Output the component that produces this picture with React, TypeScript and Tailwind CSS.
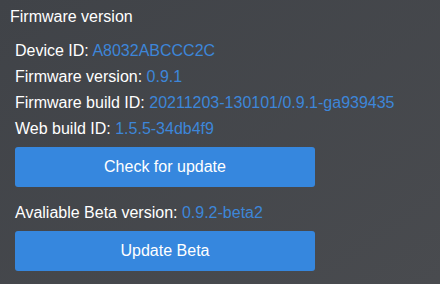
export default function App() {
  const rows: [string, string][] = [
    ["Device ID", "A8032ABCCC2C"],
    ["Firmware version", "0.9.1"],
    ["Firmware build ID", "20211203-130101/0.9.1-ga939435"],
    ["Web build ID", "1.5.5-34db4f9"],
  ];
  return (
    <div
      className="w-[440px] h-[284px] bg-gradient-to-br from-[#404348] to-[#494b4f] text-white text-[16px] leading-[24px] overflow-hidden"
      style={{ fontFamily: '"Liberation Sans", Arial, sans-serif' }}
    >
      <div className="pt-[5px] pl-[10px]">Firmware version</div>
      <div className="pl-[15px] pt-[9px] flex flex-col">
        {rows.map(([k, v]) => (
          <div key={k} className="leading-[26px]">
            {k}: <span className="text-[#3d86d9]">{v}</span>
          </div>
        ))}
        <button className="mt-[5px] w-[300px] h-[40px] rounded-[3px] bg-[#3687de] text-white text-[16px]">
          Check for update
        </button>
        <div className="mt-[13px] leading-[26px]">
          Avaliable Beta version: <span className="text-[#3d86d9]">0.9.2-beta2</span>
        </div>
        <button className="mt-[5px] w-[300px] h-[40px] rounded-[3px] bg-[#3687de] text-white text-[16px]">
          Update Beta
        </button>
      </div>
    </div>
  );
}
